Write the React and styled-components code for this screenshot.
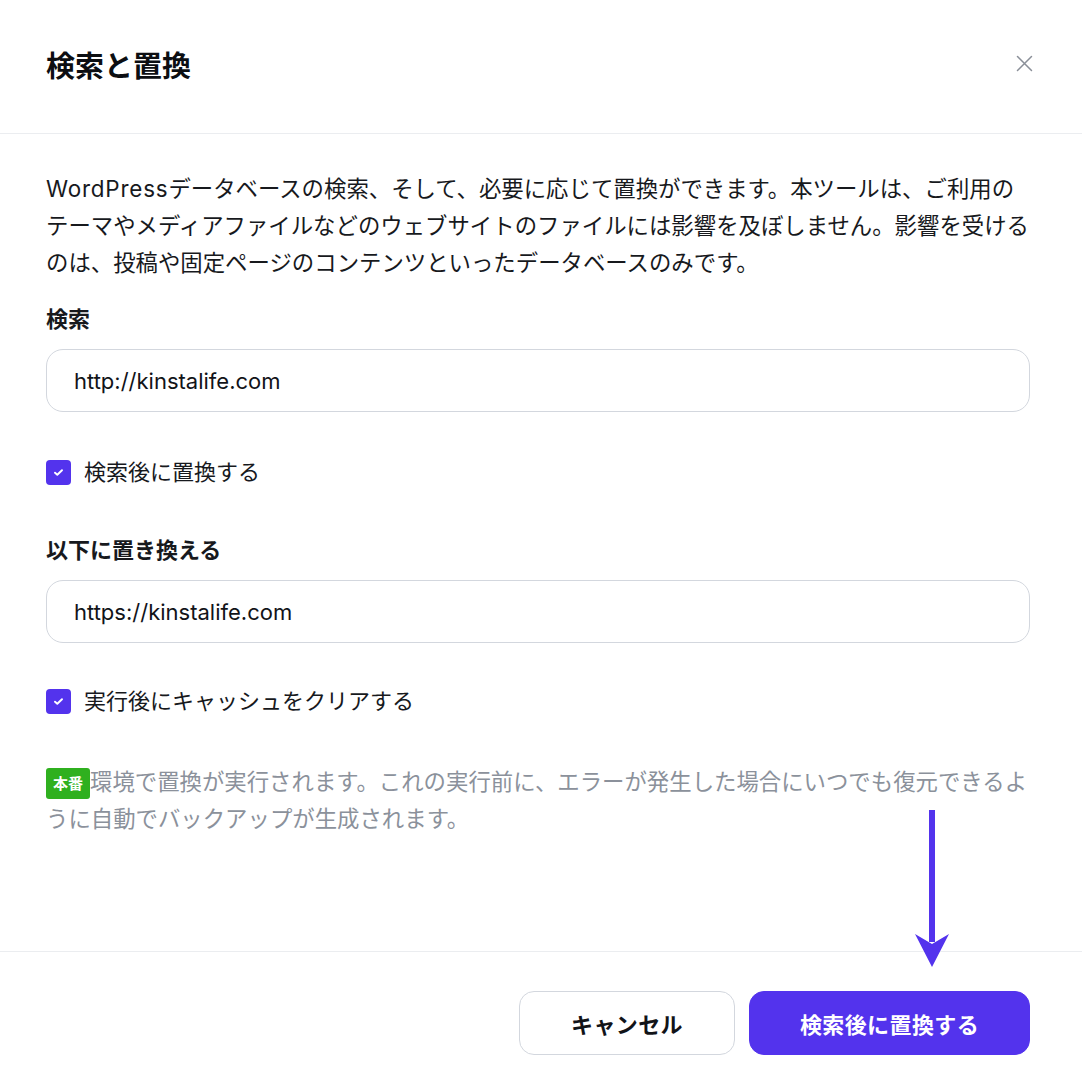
import React from 'react';
import styled, { createGlobalStyle } from 'styled-components';

const GlobalStyle = createGlobalStyle`
	html, body {
		margin: 0;
		padding: 0;
		background: #ffffff;
	}
	body {
		font-family: Inter, "Noto Sans CJK JP", sans-serif;
		color: #111318;
		-webkit-font-smoothing: antialiased;
	}
`;

const ModalCss = styled.div`
	width: 1082px;
	height: 1088px;
	display: flex;
	flex-direction: column;
	background: #fff;
	position: relative;
	overflow: hidden;
`;

const HeaderCss = styled.header`
	height: 134px;
	box-sizing: border-box;
	padding: 0 48px 6px 46px;
	display: flex;
	align-items: center;
	justify-content: space-between;
	border-bottom: 1px solid #ebedf0;
	flex-shrink: 0;
`;

const TitleCss = styled.h1`
	margin: 0;
	font-size: 29px;
	font-weight: 700;
	color: #0c0e12;
`;

const CloseCss = styled.button`
	border: 0;
	background: none;
	padding: 0;
	width: 20px;
	height: 20px;
	display: flex;
	align-items: center;
	justify-content: center;
	color: #8a8f98;
	cursor: pointer;
`;

const BodyCss = styled.main`
	flex: 1;
	padding: 36px 52px 0 46px;
	display: flex;
	flex-direction: column;
`;

const IntroCss = styled.p`
	margin: 0 -3px 0 0;
	font-size: 22.4px;
	line-height: 37px;
	color: #17191d;
`;

const LatinCss = styled.span`
	letter-spacing: 0.8px;
`;

const LabelCss = styled.label`
	display: block;
	margin-top: ${({ $top }) => $top}px;
	font-size: 22px;
	line-height: 28px;
	font-weight: 700;
	color: #17191d;
`;

const InputCss = styled.input`
	box-sizing: border-box;
	margin-top: 16px;
	width: 100%;
	height: 63px;
	border: 1px solid #d3d7de;
	border-radius: 17px;
	padding: 0 27px;
	font-family: Inter, "Noto Sans CJK JP", sans-serif;
	font-size: 22px;
	color: #111318;
	background: #fff;
	outline: none;
`;

const CheckRowCss = styled.div`
	display: flex;
	align-items: center;
	gap: 13px;
	margin-top: ${({ $top }) => $top}px;
	font-size: 22px;
	line-height: 30px;
	color: #17191d;
`;

const CheckBoxCss = styled.span`
	width: 25px;
	height: 25px;
	border-radius: 4px;
	background: #5333ed;
	display: flex;
	align-items: center;
	justify-content: center;
	flex-shrink: 0;
`;

const NoteCss = styled.p`
	margin: 47px -3px 0 0;
	font-size: 22.4px;
	line-height: 37px;
	color: #8b919b;
`;

const BadgeCss = styled.span`
	display: inline-block;
	background: #2fb01f;
	color: #fff;
	font-size: 15px;
	font-weight: 700;
	line-height: 31px;
	height: 31px;
	width: 44px;
	text-align: center;
	border-radius: 3px;
	vertical-align: 1px;
`;

const FooterCss = styled.footer`
	height: 137px;
	box-sizing: border-box;
	border-top: 1px solid #ebedf0;
	padding: 39px 52px 0 0;
	display: flex;
	justify-content: flex-end;
	align-items: flex-start;
	gap: 14px;
	flex-shrink: 0;
`;

const ButtonCss = styled.button`
	box-sizing: border-box;
	height: 64px;
	width: ${({ $width }) => $width}px;
	border-radius: 15px;
	font-family: Inter, "Noto Sans CJK JP", sans-serif;
	font-size: 22px;
	font-weight: 700;
	letter-spacing: 0.4px;
	cursor: pointer;
	border: 1px solid ${({ $primary }) => ($primary ? '#5333ed' : '#d3d7de')};
	background: ${({ $primary }) => ($primary ? '#5333ed' : '#ffffff')};
	color: ${({ $primary }) => ($primary ? '#ffffff' : '#111318')};
`;

const ArrowCss = styled.svg`
	position: absolute;
	left: 914px;
	top: 810px;
`;

function Check() {
	return (
		<CheckBoxCss>
			<svg width="11" height="9" viewBox="0 0 11 9" fill="none">
				<path d="M2 4.7 L4.3 6.8 L9 2.2" stroke="#fff" strokeWidth="1.9" strokeLinecap="round" strokeLinejoin="round" />
			</svg>
		</CheckBoxCss>
	);
}

export default function App() {
	return (
		<>
			<GlobalStyle />
			<ModalCss>
				<HeaderCss>
					<TitleCss>検索と置換</TitleCss>
					<CloseCss aria-label="close">
						<svg width="17" height="17" viewBox="0 0 17 17" fill="none">
							<path d="M1.5 1.5 L15.5 15.5 M15.5 1.5 L1.5 15.5" stroke="currentColor" strokeWidth="1.5" strokeLinecap="round" />
						</svg>
					</CloseCss>
				</HeaderCss>
				<BodyCss>
					<IntroCss>
						<LatinCss>WordPress</LatinCss>データベースの検索、そして、必要に応じて置換ができます。本ツールは、ご利用のテーマやメディアファイルなどのウェブサイトのファイルには影響を及ぼしません。影響を受けるのは、投稿や固定ページのコンテンツといったデータベースのみです。
					</IntroCss>
					<LabelCss $top={24}>検索</LabelCss>
					<InputCss defaultValue="http://kinstalife.com" />
					<CheckRowCss $top={45}>
						<Check />
						検索後に置換する
					</CheckRowCss>
					<LabelCss $top={49}>以下に置き換える</LabelCss>
					<InputCss defaultValue="https://kinstalife.com" />
					<CheckRowCss $top={43}>
						<Check />
						実行後にキャッシュをクリアする
					</CheckRowCss>
					<NoteCss>
						<BadgeCss>本番</BadgeCss>環境で置換が実行されます。これの実行前に、エラーが発生した場合にいつでも復元できるように自動でバックアップが生成されます。
					</NoteCss>
				</BodyCss>
				<FooterCss>
					<ButtonCss $width={216}>キャンセル</ButtonCss>
					<ButtonCss $primary $width={281}>検索後に置換する</ButtonCss>
				</FooterCss>
				<ArrowCss width="36" height="158" viewBox="0 0 36 158">
					<rect x="15" y="0" width="6" height="132" fill="#5333ed" />
					<path d="M1 124 L18 157 L35 124 L18 134 Z" fill="#5333ed" />
				</ArrowCss>
			</ModalCss>
		</>
	);
}
